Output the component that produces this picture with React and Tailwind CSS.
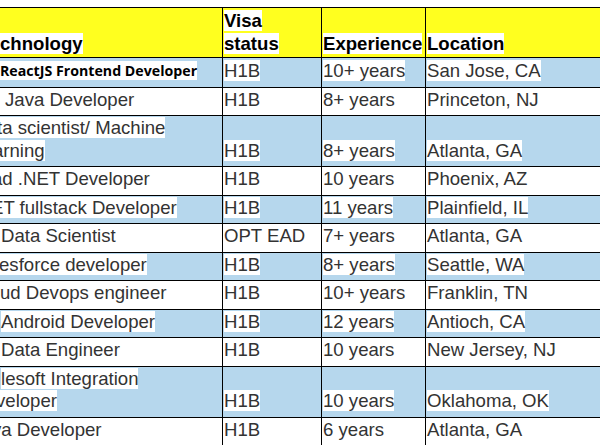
import React from 'react';

const BLUE = 'bg-[#b6d7ed]';

// each tech line: [text, margin class] — the first column is clipped at the left edge
const rows = [
  { blue: true, tech: [['ReactJS Frontend Developer', '']], bold: true, visa: 'H1B', exp: '10+ years', loc: 'San Jose, CA' },
  { tech: [['Java Developer', 'ml-[5px]']], visa: 'H1B', exp: '8+ years', loc: 'Princeton, NJ' },
  { blue: true, tech: [['ta scientist/ Machine', '-ml-[3px]'], ['arning', '-ml-[7px]']], visa: 'H1B', exp: '8+ years', loc: 'Atlanta, GA' },
  { tech: [['ad .NET Developer', '-ml-[8px]']], visa: 'H1B', exp: '10 years', loc: 'Phoenix, AZ' },
  { blue: true, tech: [['ET fullstack Developer', '-ml-[9px]']], visa: 'H1B', exp: '11 years', loc: 'Plainfield, IL' },
  { tech: [['Data Scientist', 'ml-[1px]']], visa: 'OPT EAD', exp: '7+ years', loc: 'Atlanta, GA' },
  { blue: true, tech: [['esforce developer', '-ml-[1px]']], visa: 'H1B', exp: '8+ years', loc: 'Seattle, WA' },
  { tech: [['ud Devops engineer', '']], visa: 'H1B', exp: '10+ years', loc: 'Franklin, TN' },
  { blue: true, tech: [['Android Developer', 'ml-[1px]']], visa: 'H1B', exp: '12 years', loc: 'Antioch, CA' },
  { tech: [['Data Engineer', 'ml-[1px]']], visa: 'H1B', exp: '10 years', loc: 'New Jersey, NJ' },
  { blue: true, tech: [['lesoft Integration', 'ml-[1px]'], ['veloper', '-ml-[4px]']], visa: 'H1B', exp: '10 years', loc: 'Oklahoma, OK' },
  { tech: [['va Developer', '-ml-[8px]']], visa: 'H1B', exp: '6 years', loc: 'Atlanta, GA' },
  { blue: true, tech: [], visa: '', exp: '', loc: '' },
];

const cell = 'border-r border-b border-black align-bottom px-[1px] pt-[1px] pb-[4px] whitespace-nowrap';
const head = 'border-t border-r border-b border-black align-bottom text-left px-[1px] pb-[2px] whitespace-nowrap';

function Hl({ children, className = '', style }) {
  return (
    <span className={`bg-white ${className}`} style={style}>
      {children}
    </span>
  );
}

export default function App() {
  return (
    <div className="w-[600px] h-[445px] overflow-hidden bg-white pt-[7px]">
      <table
        className="table-fixed border-separate border-spacing-0 w-[700px] text-[18.6px] leading-[22.5px] text-[#333333]"
        style={{ fontFamily: '"Liberation Sans", Arial, sans-serif' }}
      >
        <colgroup>
          <col className="w-[223px]" />
          <col className="w-[99px]" />
          <col className="w-[104px]" />
          <col className="w-[274px]" />
        </colgroup>
        <thead>
          <tr className="bg-[#ffff1f] text-black font-bold h-[51px]">
            <th className={`${head} pl-0`}>
              <Hl>chnology</Hl>
            </th>
            <th className={head}>
              <Hl>Visa</Hl>
              <br />
              <Hl>status</Hl>
            </th>
            <th className={head}>
              <Hl>Experience</Hl>
            </th>
            <th className={head}>
              <Hl>Location</Hl>
            </th>
          </tr>
        </thead>
        <tbody>
          {rows.map((r, i) => (
            <tr key={i} className={r.blue ? BLUE : 'bg-white'}>
              <td className={`${cell} pl-0`}>
                {r.bold ? (
                  <Hl className="font-bold text-black text-[14.2px]" style={{ fontFamily: '"Open Sans", sans-serif' }}>
                    {r.tech[0][0]}
                  </Hl>
                ) : (
                  r.tech.map(([t, m], j) => (
                    <React.Fragment key={j}>
                      {j > 0 && <br />}
                      <Hl className={m}>{t}</Hl>
                    </React.Fragment>
                  ))
                )}
              </td>
              <td className={cell}>{r.visa && <Hl>{r.visa}</Hl>}</td>
              <td className={cell}>{r.exp && <Hl>{r.exp}</Hl>}</td>
              <td className={cell}>{r.loc && <Hl>{r.loc}</Hl>}</td>
            </tr>
          ))}
        </tbody>
      </table>
    </div>
  );
}
